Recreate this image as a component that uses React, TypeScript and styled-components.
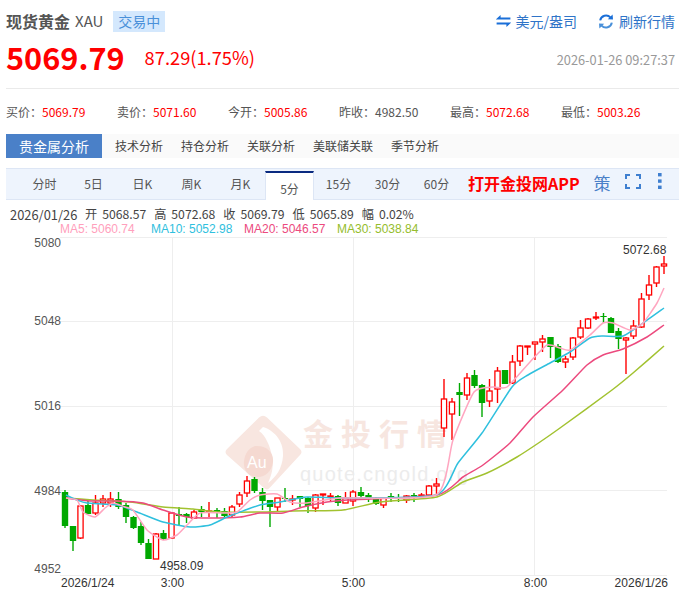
import React from 'react';
import styled, { createGlobalStyle } from 'styled-components';

const GlobalStyle = createGlobalStyle`
  html, body {
    margin: 0;
    padding: 0;
    background: #fff;
  }
  body {
    font-family: "Noto Sans CJK SC", "Open Sans", sans-serif;
    overflow: hidden;
  }
`;

const Page = styled.div`
  width: 679px;
  height: 590px;
  overflow: hidden;
  background: #fff;
`;

const TopRow = styled.div`
  display: flex;
  align-items: center;
  height: 22px;
  padding: 10px 4px 0 6px;
`;

const Title = styled.div`
  font-size: 16px;
  font-weight: 700;
  color: #555;
  line-height: 22px;
`;

const Code = styled.div`
  font-size: 15px;
  color: #555;
  margin-left: 5px;
  line-height: 22px;
`;

const Badge = styled.div`
  width: 52px;
  height: 21px;
  margin-left: 10px;
  background: #d4e8fd;
  color: #4a90d9;
  font-size: 14px;
  line-height: 21px;
  text-align: center;
`;

const Actions = styled.div`
  margin-left: auto;
  display: flex;
  align-items: center;
  gap: 21px;
`;

const Action = styled.div`
  display: flex;
  align-items: center;
  gap: 5px;
  font-size: 14px;
  color: #2f74c8;
`;

const PriceRow = styled.div`
  display: flex;
  align-items: center;
  height: 56px;
  padding-right: 4px;
  margin-left: 6px;
  border-bottom: 1px solid #eaeaea;
`;

const Price = styled.div`
  font-size: 30.7px;
  font-weight: 700;
  color: #f00;
  line-height: 40px;
  margin-top: -7px;
`;

const Change = styled.div`
  font-size: 18.3px;
  color: #f00;
  margin-left: 20px;
  margin-top: -6px;
`;

const Stamp = styled.div`
  margin-left: auto;
  font-size: 12.8px;
  color: #999;
  margin-top: -1px;
`;

const Stats = styled.div`
  display: grid;
  grid-template-columns: repeat(6, 111px);
  height: 45px;
  align-items: center;
  padding-left: 6px;
`;

const Stat = styled.div`
  font-size: 12px;
  color: #555;
  white-space: nowrap;
`;

const StatValue = styled.span<{ $red?: boolean }>`
  color: ${(p) => (p.$red ? '#f00' : '#555')};
`;

const Nav = styled.div`
  display: flex;
  height: 24px;
  margin-left: 6px;
  background: #fafafa;
  align-items: stretch;
`;

const NavActive = styled.div`
  width: 96px;
  background: #4a80c8;
  color: #fff;
  font-size: 14px;
  line-height: 24px;
  text-align: center;
  margin-right: 13px;
`;

const NavItem = styled.div`
  font-size: 12px;
  color: #444;
  line-height: 24px;
  margin-right: 18px;
`;

const Tabs = styled.div`
  display: flex;
  align-items: stretch;
  box-sizing: border-box;
  height: 32px;
  margin: 10px 0 0 6px;
  padding-left: 14px;
  background: #eef4fd;
  border-top: 1px solid #dde6f5;
  border-bottom: 1px solid #dde6f5;
`;

const Tab = styled.div<{ $active?: boolean }>`
  box-sizing: border-box;
  width: 49px;
  margin-top: ${(p) => (p.$active ? '2px' : '0')};
  margin-bottom: ${(p) => (p.$active ? '-1px' : '0')};
  font-size: 12px;
  color: #555;
  line-height: ${(p) => (p.$active ? '31px' : '29px')};
  text-align: center;
  background: ${(p) => (p.$active ? '#fff' : 'transparent')};
  border-top: ${(p) => (p.$active ? '2px solid #0a2a80' : 'none')};
  border-left: ${(p) => (p.$active ? '1px solid #dde6f5' : 'none')};
  border-right: ${(p) => (p.$active ? '1px solid #dde6f5' : 'none')};
`;

const AppLink = styled.div`
  margin-left: 7px;
  font-size: 16px;
  font-weight: 700;
  color: #f00;
  line-height: 28px;
  white-space: nowrap;
`;

const Strategy = styled.div`
  margin-left: 14px;
  font-size: 17px;
  color: #4a80c8;
  line-height: 28px;
`;

const TabIcons = styled.div`
  display: flex;
  align-items: center;
  margin: -2px 0 0 14px;
  gap: 17px;
  height: 28px;
`;

const Info = styled.div`
  display: flex;
  gap: 8px;
  padding: 7px 0 0 10px;
  font-size: 12.2px;
  line-height: 15px;
  color: #444;
  white-space: nowrap;
`;

const InfoDate = styled.div`
  width: 67px;
  font-size: 12.9px;
`;

const InfoItem = styled.div`
  display: flex;
  gap: 5px;
`;

const MaRow = styled.div`
  display: flex;
  padding-left: 60px;
  font-family: "Liberation Sans", Arial, sans-serif;
  font-size: 12px;
  line-height: 15px;
  white-space: nowrap;
`;

const MaLabel = styled.div<{ $color: string; $width: number }>`
  color: ${(p) => p.$color};
  width: ${(p) => p.$width}px;
`;

const ChartSvg = styled.svg`
  display: block;
  width: 679px;
  height: 353px;
`;

const AxisText = styled.text`
  font-family: "Liberation Sans", Arial, sans-serif;
  font-size: 12px;
  fill: #333;
`;

const PriceAxisText = styled(AxisText)`
  fill: #555;
`;

const WatermarkTitle = styled.text`
  font-family: "Noto Sans CJK SC", sans-serif;
  font-size: 30px;
  font-weight: 700;
  letter-spacing: 8px;
  fill: #f7e6e0;
`;

const WatermarkUrl = styled.text`
  font-family: "Liberation Sans", Arial, sans-serif;
  font-size: 20px;
  letter-spacing: 1.25px;
  fill: #ececec;
`;

const WatermarkAu = styled.text`
  font-family: "Liberation Sans", Arial, sans-serif;
  font-size: 16px;
  fill: #fff;
`;

// up, body top, body bottom, high, low (pixel rows of the chart)
const candles: [number, number, number, number, number][] = [
  [0, 492, 526, 490, 528], [0, 526, 541, 526, 551], [1, 506, 538, 505, 539], [0, 505, 514, 501, 514],
  [1, 503, 513, 495, 515], [1, 499, 503, 495, 507], [1, 499, 503, 492, 507], [0, 499, 507, 492, 509],
  [0, 505, 517, 503, 523], [0, 517, 528, 516, 529], [0, 526, 543, 522, 545], [0, 543, 559, 539, 559],
  [1, 534, 559, 533, 559], [0, 533, 539, 530, 540], [1, 513, 538, 512, 539], [0, 514, 516, 507, 525],
  [0, 514, 517, 513, 523], [1, 512, 518, 510, 519], [0, 509, 512, 506, 517], [1, 511, 512, 502, 517],
  [0, 510, 512, 508, 518], [0, 511, 516, 508, 518], [1, 507, 515, 505, 518], [1, 495, 504, 492, 507],
  [1, 481, 493, 476, 497], [0, 479, 491, 477, 493], [0, 492, 501, 488, 510], [0, 500, 507, 500, 527],
  [1, 498, 507, 498, 512], [0, 498, 499, 488, 502], [1, 499, 500, 495, 505], [0, 496, 499, 496, 507],
  [0, 498, 506, 497, 513], [1, 495, 508, 494, 512], [1, 494, 495, 494, 505], [1, 496, 497, 493, 502],
  [0, 496, 503, 495, 506], [1, 498, 503, 492, 503], [1, 492, 501, 490, 506], [0, 492, 496, 487, 498],
  [0, 495, 498, 493, 502], [0, 498, 504, 497, 505], [1, 498, 505, 497, 508], [0, 496, 499, 493, 502],
  [0, 497, 498, 494, 502], [1, 496, 500, 495, 503], [0, 495, 496, 493, 502], [1, 495, 496, 493, 498],
  [1, 486, 495, 485, 496], [1, 484, 486, 478, 495], [1, 399, 428, 379, 437], [1, 402, 414, 398, 440],
  [0, 392, 395, 383, 416], [1, 378, 395, 373, 400], [0, 375, 386, 370, 388], [0, 385, 403, 384, 417],
  [1, 391, 401, 379, 407], [1, 371, 389, 367, 403], [0, 370, 384, 370, 384], [1, 362, 383, 355, 384],
  [1, 346, 361, 345, 366], [1, 346, 347, 346, 355], [1, 342, 344, 342, 360], [1, 339, 342, 335, 352],
  [0, 337, 347, 337, 358], [0, 346, 362, 344, 363], [1, 359, 362, 356, 368], [1, 338, 357, 337, 360],
  [1, 328, 337, 320, 339], [1, 319, 328, 318, 329], [1, 317, 318, 312, 320], [0, 316, 317, 313, 323],
  [0, 318, 333, 317, 333], [0, 331, 339, 328, 349], [1, 338, 340, 337, 374], [1, 326, 336, 320, 339],
  [1, 299, 327, 293, 328], [1, 285, 295, 275, 300], [1, 267, 283, 266, 287], [1, 264, 266, 256, 274],
];

type Pt = [number, number];

const ma5: Pt[] = [[66, 498], [77, 500], [83, 512], [95, 517], [105, 508], [113, 503], [125, 507], [133, 510], [147, 530], [163, 540], [177, 535], [187, 525], [200, 513], [223, 513], [237, 512], [250, 500], [260, 495], [277, 494], [290, 502], [307, 503], [340, 498], [436, 495], [453, 440], [474, 392], [493, 387], [507, 387], [530, 362], [547, 345], [560, 348], [570, 350], [590, 335], [603, 323], [613, 323], [630, 330], [643, 323], [657, 303], [664, 288]];
const ma10: Pt[] = [[66, 495], [77, 500], [87, 503], [117, 505], [137, 512], [163, 522], [190, 527], [210, 525], [227, 517], [240, 512], [260, 505], [280, 502], [307, 497], [340, 498], [436, 495], [458, 463], [482, 433], [512, 387], [528, 375], [550, 363], [570, 352], [590, 338], [603, 336], [623, 336], [643, 323], [664, 308]];
const ma20: Pt[] = [[66, 498], [90, 501], [117, 501], [143, 503], [163, 510], [187, 517], [210, 518], [240, 517], [260, 513], [283, 513], [303, 507], [327, 502], [347, 500], [437, 495], [463, 477], [483, 465], [510, 443], [533, 417], [563, 390], [587, 365], [603, 355], [623, 349], [647, 337], [664, 325]];
const ma30: Pt[] = [[66, 498], [93, 500], [130, 502], [163, 507], [193, 509], [220, 512], [260, 512], [293, 511], [343, 510], [380, 502], [437, 497], [463, 482], [487, 473], [517, 457], [540, 442], [560, 428], [612, 390], [633, 373], [664, 346]];

const smooth = (pts: Pt[]) => {
  let d = `M${pts[0][0]} ${pts[0][1]}`;
  for (let i = 0; i < pts.length - 1; i++) {
    const a = pts[Math.max(i - 1, 0)];
    const b = pts[i];
    const c = pts[i + 1];
    const e = pts[Math.min(i + 2, pts.length - 1)];
    const k = 0.1;
    d += ` C${b[0] + (c[0] - a[0]) * k} ${b[1] + (c[1] - a[1]) * k} ${c[0] - (e[0] - b[0]) * k} ${c[1] - (e[1] - b[1]) * k} ${c[0]} ${c[1]}`;
  }
  return d;
};

const SwapIcon = () => (
  <svg width="15" height="12" viewBox="0 0 15 12">
    <path d="M0 4.2 L4.6 0 L4.6 2.6 L14.4 2.6 L14.4 4.6 L0 4.6 Z" fill="#1a6fd8" />
    <path d="M15 7.4 L0.6 7.4 L0.6 9.4 L10.4 9.4 L10.4 12 L15 7.8 Z" fill="#1a6fd8" />
  </svg>
);

const RefreshIcon = () => (
  <svg width="16" height="15" viewBox="0 0 16 15" fill="none">
    <path d="M2.2 6.4 A5.9 5.9 0 0 1 12.4 3.4" stroke="#1a6fd8" strokeWidth="2" />
    <path d="M9.8 5.2 L15 5.6 L14.6 0.6 Z" fill="#1a6fd8" />
    <path d="M13.8 8.6 A5.9 5.9 0 0 1 3.6 11.6" stroke="#4a90d9" strokeWidth="2" />
    <path d="M6.2 9.8 L1 9.4 L1.4 14.4 Z" fill="#4a90d9" />
  </svg>
);

const FullscreenIcon = () => (
  <svg width="16" height="15" viewBox="0 0 16 15" fill="none" stroke="#3f7fd0" strokeWidth="2">
    <path d="M5 1 H1 V5" />
    <path d="M11 1 H15 V5" />
    <path d="M1 10 V14 H5" />
    <path d="M15 10 V14 H11" />
  </svg>
);

const MoreIcon = () => (
  <svg width="4" height="17" viewBox="0 0 4 17" fill="#3f7fd0">
    <rect x="0" y="0" width="3.6" height="3.4" />
    <rect x="0" y="6.4" width="3.6" height="3.4" />
    <rect x="0" y="12.6" width="3.6" height="3.4" />
  </svg>
);

const Watermark = () => (
  <g>
    <path
      d="M259 417.5 Q263 414 267 417.5 L300 449 Q303 452 300 455 L270 487.5 Q267 491 264 488 L227 455 Q224 452 227 449 Z"
      fill="#f8e6e0"
    />
    <path
      d="M263 427 C276 431 284 443 283 456 C282 469 276 477 268 483 C272 474 274 466 272 456 C270 446 266 436 259 431 Z"
      fill="#fff"
    />
    <path d="M255 446 C266 445 274 452 273 462 C272 471 265 477 258 477 C248 477 243 470 244 461 C245 453 249 448 255 446 Z" fill="#f5d9d1" />
    <WatermarkAu x="247" y="468">Au</WatermarkAu>
    <WatermarkTitle x="303" y="445">金投行情</WatermarkTitle>
    <WatermarkUrl x="300" y="481">quote.cngold.org</WatermarkUrl>
  </g>
);

const gridY = [237.5, 321.5, 406.5, 490.5, 575.5];
const gridX = [172.5, 353.5, 534.5];

const Chart = () => (
  <ChartSvg viewBox="0 237 679 353">
    <g stroke="#eeeeee" strokeWidth="1">
      {gridY.map((y) => (
        <line key={y} x1="60" x2="667" y1={y} y2={y} />
      ))}
      {gridX.map((x) => (
        <line key={x} x1={x} x2={x} y1="237" y2="575" />
      ))}
    </g>
    <Watermark />
    {candles.map(([up, top, bottom, high, low], i) => {
      const x = Math.round((65.2 + i * 7.58) * 2) / 2;
      const color = up ? '#ff0000' : '#00a800';
      return (
        <g key={i}>
          <line x1={x} x2={x} y1={high} y2={low} stroke={color} strokeWidth="1.4" />
          {up ? (
            <rect x={x - 2.6} y={top} width="5.2" height={Math.max(bottom - top, 1)} fill="#fff" stroke={color} strokeWidth="1.3" />
          ) : (
            <rect x={x - 3.2} y={top} width="6.4" height={bottom - top} fill={color} />
          )}
        </g>
      );
    })}
    <g fill="none" strokeWidth="1.5" strokeLinejoin="round">
      <path d={smooth(ma30)} stroke="#a2c230" />
      <path d={smooth(ma20)} stroke="#ec4a7e" />
      <path d={smooth(ma10)} stroke="#2fc0de" />
      <path d={smooth(ma5)} stroke="#ffa6c0" />
    </g>
    <PriceAxisText x="61" y="247" textAnchor="end">5080</PriceAxisText>
    <PriceAxisText x="61" y="325" textAnchor="end">5048</PriceAxisText>
    <PriceAxisText x="61" y="410" textAnchor="end">5016</PriceAxisText>
    <PriceAxisText x="61" y="495" textAnchor="end">4984</PriceAxisText>
    <PriceAxisText x="61" y="573" textAnchor="end">4952</PriceAxisText>
    <AxisText x="623" y="254">5072.68</AxisText>
    <AxisText x="160" y="570">4958.09</AxisText>
    <AxisText x="61" y="587">2026/1/24</AxisText>
    <AxisText x="172.5" y="587" textAnchor="middle">3:00</AxisText>
    <AxisText x="353.5" y="587" textAnchor="middle">5:00</AxisText>
    <AxisText x="535.5" y="587" textAnchor="middle">8:00</AxisText>
    <AxisText x="668" y="587" textAnchor="end">2026/1/26</AxisText>
  </ChartSvg>
);

const stats = [
  ['买价：', '5069.79', true],
  ['卖价：', '5071.60', true],
  ['今开：', '5005.86', true],
  ['昨收：', '4982.50', false],
  ['最高：', '5072.68', true],
  ['最低：', '5003.26', true],
] as const;

const navItems = ['技术分析', '持仓分析', '关联分析', '美联储关联', '季节分析'];
const tabs = ['分时', '5日', '日K', '周K', '月K', '5分', '15分', '30分', '60分'];
const infoItems = [
  ['开', '5068.57'],
  ['高', '5072.68'],
  ['收', '5069.79'],
  ['低', '5065.89'],
  ['幅', '0.02%'],
];
const maItems = [
  { text: 'MA5: 5060.74', color: '#ffa0bc', width: 91 },
  { text: 'MA10: 5052.98', color: '#2fc0de', width: 93 },
  { text: 'MA20: 5046.57', color: '#ec4a7e', width: 93 },
  { text: 'MA30: 5038.84', color: '#95bd2c', width: 90 },
];

const App: React.FC = () => (
  <Page>
    <GlobalStyle />
    <TopRow>
      <Title>现货黄金</Title>
      <Code>XAU</Code>
      <Badge>交易中</Badge>
      <Actions>
        <Action>
          <SwapIcon />
          美元/盎司
        </Action>
        <Action>
          <RefreshIcon />
          刷新行情
        </Action>
      </Actions>
    </TopRow>
    <PriceRow>
      <Price>5069.79</Price>
      <Change>87.29(1.75%)</Change>
      <Stamp>2026-01-26 09:27:37</Stamp>
    </PriceRow>
    <Stats>
      {stats.map(([label, value, red]) => (
        <Stat key={label}>
          {label}
          <StatValue $red={red}>{value}</StatValue>
        </Stat>
      ))}
    </Stats>
    <Nav>
      <NavActive>贵金属分析</NavActive>
      {navItems.map((item) => (
        <NavItem key={item}>{item}</NavItem>
      ))}
    </Nav>
    <Tabs>
      {tabs.map((tab) => (
        <Tab key={tab} $active={tab === '5分'}>
          {tab}
        </Tab>
      ))}
      <AppLink>打开金投网APP</AppLink>
      <Strategy>策</Strategy>
      <TabIcons>
        <FullscreenIcon />
        <MoreIcon />
      </TabIcons>
    </Tabs>
    <Info>
      <InfoDate>2026/01/26</InfoDate>
      {infoItems.map(([label, value]) => (
        <InfoItem key={label}>
          <div>{label}</div>
          <div>{value}</div>
        </InfoItem>
      ))}
    </Info>
    <MaRow>
      {maItems.map((ma) => (
        <MaLabel key={ma.text} $color={ma.color} $width={ma.width}>
          {ma.text}
        </MaLabel>
      ))}
    </MaRow>
    <Chart />
  </Page>
);

export default App;
